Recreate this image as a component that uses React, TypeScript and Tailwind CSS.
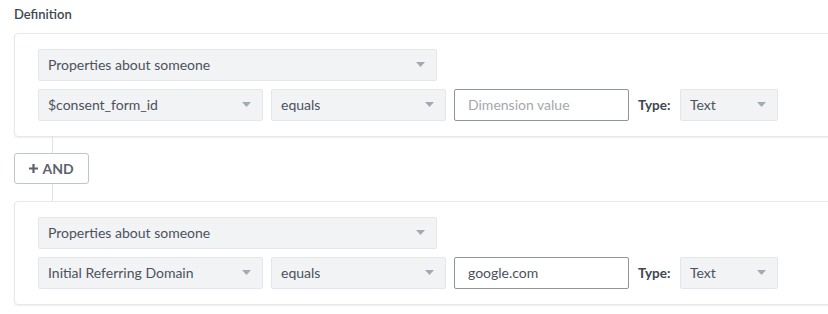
const font = { fontFamily: '"Lato", "Open Sans", Arial, sans-serif' };

function Caret() {
    return (
        <svg width="9" height="5" viewBox="0 0 9 5" className="shrink-0">
            <path d="M0 0 L9 0 L4.5 5 Z" fill="#a3a9b0" />
        </svg>
    );
}

function Select({ label, w }: { label: string; w: string }) {
    return (
        <div className={`${w} h-[32px] flex items-center justify-between pl-[9px] pr-[11px] pb-px bg-[#f2f3f5] border border-[#e3e6ea] rounded-[2px] text-[14px] text-[#4a525c]`}>
            <span className="truncate">{label}</span>
            <Caret />
        </div>
    );
}

function Condition({ property, value }: { property: string; value?: string }) {
    return (
        <section className="w-[860px] bg-white border border-[#e6e9ec] rounded-[4px] shadow-[0_1px_2px_rgba(0,0,0,0.07)] pl-[23px] py-[15px] flex flex-col gap-[8px]">
            <Select label="Properties about someone" w="w-[399px]" />
            <div className="flex items-center">
                <Select label={property} w="w-[225px]" />
                <div className="w-[8px]" />
                <Select label="equals" w="w-[175px]" />
                <div className="w-[8px]" />
                <div className="w-[175px] h-[32px] flex items-center px-[13px] pb-px border border-[#8e959d] rounded-[2px] text-[14px]">
                    {value ? (
                        <span className="text-[#4a525c]">{value}</span>
                    ) : (
                        <span className="text-[#a2a8ae]">Dimension value</span>
                    )}
                </div>
                <span className="ml-[9px] w-[42px] text-[13.5px] font-bold text-[#3e4650]">Type:</span>
                <Select label="Text" w="w-[98px]" />
            </div>
        </section>
    );
}

export default function App() {
    return (
        <main style={font} className="w-[828px] h-[314px] overflow-hidden bg-white pl-[14px] pt-[5px]">
            <h2 className="text-[13px] font-semibold text-[#3e4650] leading-[18px]">Definition</h2>
            <div className="mt-[10px] flex flex-col">
                <Condition property="$consent_form_id" />
                <div className="ml-[38px] w-px h-[16px] bg-[#dfe2e6]" />
                <button className="w-[75px] h-[31px] flex items-center justify-center gap-[4px] border border-[#bfc5cb] rounded-[3px] bg-white text-[14px] font-bold text-[#5a636d]">
                    <svg width="9" height="9" viewBox="0 0 9 9">
                        <path d="M4.5 0 V9 M0 4.5 H9" stroke="#5a636d" strokeWidth="2.2" />
                    </svg>
                    <span>AND</span>
                </button>
                <div className="ml-[38px] w-px h-[17px] bg-[#dfe2e6]" />
                <Condition property="Initial Referring Domain" value="google.com" />
            </div>
        </main>
    );
}
